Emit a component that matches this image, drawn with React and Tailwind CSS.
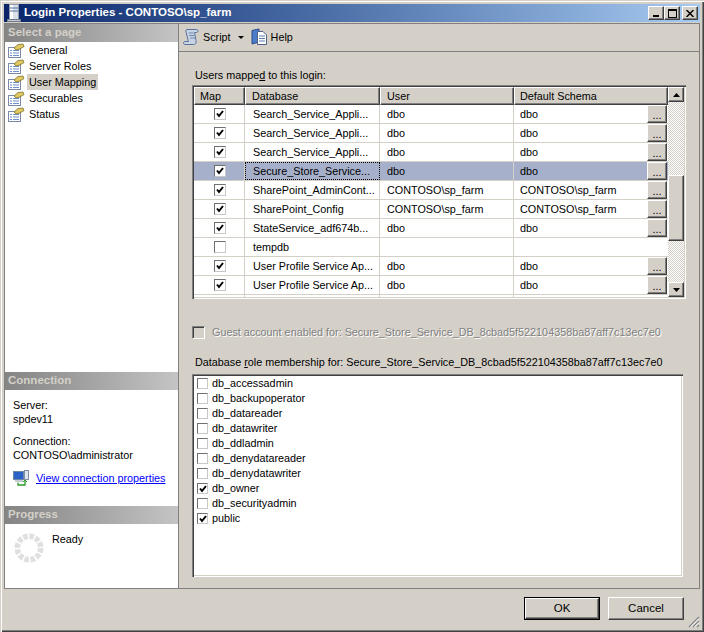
import React from 'react';

const FONT = "font-['Liberation_Sans',Arial,sans-serif]";
const BEVEL = 'border border-t-white border-l-white border-r-[#404040] border-b-[#404040] shadow-[inset_-1px_-1px_0_#808080] bg-[#d4d0c8]';
const SUNKEN = 'shadow-[inset_1px_1px_0_#808080,inset_2px_2px_0_#404040,inset_-1px_-1px_0_#fff,inset_-2px_-2px_0_#d4d0c8]';
const HEADER_BAR = 'flex items-center h-[18px] px-[3px] bg-linear-to-r from-[#858585] to-[#c4c4c4] text-[11.5px] font-bold text-[#d4d0c8]';

const PAGES = ['General', 'Server Roles', 'User Mapping', 'Securables', 'Status'];

const ROWS = [
  { db: 'Search_Service_Appli...', user: 'dbo', schema: 'dbo', on: true },
  { db: 'Search_Service_Appli...', user: 'dbo', schema: 'dbo', on: true },
  { db: 'Search_Service_Appli...', user: 'dbo', schema: 'dbo', on: true },
  { db: 'Secure_Store_Service...', user: 'dbo', schema: 'dbo', on: true, selected: true },
  { db: 'SharePoint_AdminCont...', user: 'CONTOSO\\sp_farm', schema: 'CONTOSO\\sp_farm', on: true },
  { db: 'SharePoint_Config', user: 'CONTOSO\\sp_farm', schema: 'CONTOSO\\sp_farm', on: true },
  { db: 'StateService_adf674b...', user: 'dbo', schema: 'dbo', on: true },
  { db: 'tempdb', user: '', schema: '', on: false },
  { db: 'User Profile Service Ap...', user: 'dbo', schema: 'dbo', on: true },
  { db: 'User Profile Service Ap...', user: 'dbo', schema: 'dbo', on: true },
  { db: '', user: '', schema: '', on: false, hidden: true },
];

const ROLES = [
  ['db_accessadmin', false],
  ['db_backupoperator', false],
  ['db_datareader', false],
  ['db_datawriter', false],
  ['db_ddladmin', false],
  ['db_denydatareader', false],
  ['db_denydatawriter', false],
  ['db_owner', true],
  ['db_securityadmin', false],
  ['public', true],
];

const Check = ({ checked, size = 'w-[12px] h-[12px]' }) => (
  <span className={`${size} shrink-0 bg-white border border-t-[#707070] border-l-[#707070] border-r-[#c8c8c8] border-b-[#c8c8c8] flex items-center justify-center`}>
    {checked && (
      <svg width="8" height="8" viewBox="0 0 8 8">
        <path d="M1 3.500 L3 6 L7 1" fill="none" stroke="#000" strokeWidth="2" />
      </svg>
    )}
  </span>
);

const PageIcon = () => (
  <svg width="17" height="15" viewBox="0 0 17 15" className="shrink-0">
    <rect x="0.500" y="4.500" width="12" height="10" fill="#fff" stroke="#7a8aa8" />
    <path d="M2 7.500h2M5 7.500h6M2 10h2M5 10h6M2 12.500h2M5 12.500h6" stroke="#6f8fc8" />
    <path d="M6 5 L10 1.500 L15 1 L16 3.500 L12 6 L8 7 Z" fill="#e0c860" stroke="#706020" strokeWidth="0.7" />
  </svg>
);

// rolled scroll, slanted like the toolbar glyph
const ScriptIcon = () => (
  <svg width="16" height="18" viewBox="0 0 16 18" className="shrink-0">
    <path d="M4 1.500 H13.500 C15.500 1.500 15.500 4.500 13.500 4.500 H11.500 L13 12.500 C13.500 15 12.500 16.500 10.500 16.500 H2 C0 16.500 0 13.500 2 13.500 H5.500 L3 4 C2.700 2.500 3 1.500 4 1.500 Z" fill="#c8d4e6" stroke="#5a7298" />
    <path d="M5.500 5h5M6.200 7.500h5M7 10h5" stroke="#6c86ac" />
  </svg>
);

const HelpIcon = () => (
  <svg width="17" height="18" viewBox="0 0 17 18" className="shrink-0">
    <path d="M1 2.500 L8 1 V14 L1 16 Z" fill="#4a7cc8" stroke="#2a4c88" />
    <path d="M6.500 3.500 H12 L15.500 7 V16.500 H6.500 Z" fill="#fff" stroke="#50608a" />
    <path d="M8 8h6M8 10.500h6M8 13h6" stroke="#5a7ab0" />
  </svg>
);

const ServerIcon = () => (
  <svg width="14" height="18" viewBox="0 0 14 18" className="shrink-0">
    <rect x="2.500" y="0.500" width="9" height="15" fill="#d8dfe8" stroke="#9098a8" />
    <rect x="3" y="1" width="3" height="14" fill="#ffffff" />
    <path d="M3 4h8M3 7h8" stroke="#5070a0" />
    <rect x="0.500" y="15.500" width="13" height="2" fill="#c0c8d8" stroke="#707888" />
  </svg>
);

const ConnectionIcon = () => (
  <svg width="17" height="16" viewBox="0 0 17 16" className="shrink-0">
    <rect x="0.500" y="1.500" width="10" height="8" fill="#2a62c8" stroke="#7088a8" />
    <rect x="2" y="10" width="8" height="2" fill="#c8ccd4" />
    <rect x="11.500" y="0.500" width="4" height="9" fill="#e0e4ec" stroke="#8090a8" />
    <path d="M5 12.500 V15 H12 V11" fill="none" stroke="#2c9a2c" strokeWidth="1.300" />
    <path d="M10 12 L12 10 L14 12" fill="none" stroke="#2c9a2c" />
  </svg>
);

const TitleButton = ({ children }) => (
  <span className={`${BEVEL} w-[16px] h-[14px] flex items-center justify-center`}>{children}</span>
);

const ScrollButton = ({ up }) => (
  <div className={`${BEVEL} h-[15px] flex items-center justify-center`}>
    <svg width="7" height="4" viewBox="0 0 7 4">
      <path d={up ? 'M0 4 L3.500 0 L7 4 Z' : 'M0 0 L3.500 4 L7 0 Z'} fill="#000" />
    </svg>
  </div>
);

const EllipsisButton = () => (
  <span className={`${BEVEL} absolute right-[1px] top-0 w-[20px] h-[18px] flex items-end justify-center pb-[2px] text-[11px] leading-[10px]`}>...</span>
);

const GridRow = ({ row }) => {
  const bg = row.selected ? 'bg-[#a6b0ca]' : 'bg-white';
  return (
    <div className={`flex h-[19px] leading-[18px] border-b border-[#d4d0c8] ${bg}`}>
      <div className="w-[51px] shrink-0 border-r border-[#d4d0c8] flex items-center justify-center pl-[1px]">
        {!row.hidden && <Check checked={row.on} />}
      </div>
      <div className={`w-[135px] shrink-0 border-r pl-[8px] whitespace-nowrap overflow-hidden ${row.selected ? 'border-r-transparent outline-1 outline-dotted -outline-offset-1 outline-black' : 'border-[#d4d0c8]'}`}>
        {row.db}
      </div>
      <div className="w-[134px] shrink-0 border-r border-[#d4d0c8] pl-[7px] whitespace-nowrap">{row.user}</div>
      <div className="relative flex-1 pl-[6px] whitespace-nowrap">
        {row.schema}
        {row.schema && <EllipsisButton />}
      </div>
    </div>
  );
};

const HeaderCell = ({ className, children }) => (
  <div className={`${BEVEL} ${className} h-[18px] leading-[16px] shrink-0 whitespace-nowrap`}>{children}</div>
);

export default function App() {
  return (
    <div className={`${FONT} w-[704px] h-[632px] flex flex-col pt-[4px] pl-[4px] pr-[4px] pb-[4px] bg-[#d4d0c8] text-[10.8px] text-black overflow-hidden shadow-[inset_1px_1px_0_#d4d0c8,inset_2px_2px_0_#fff,inset_-1px_-1px_0_#404040,inset_-2px_-2px_0_#808080]`}>
      {/* title bar */}
      <div className="h-[18px] shrink-0 flex items-center pl-[3px] pr-[2px] bg-linear-to-r from-[#0a246a] to-[#a6caf0]">
        <ServerIcon />
        <span className="ml-[3px] text-white font-bold text-[11.500px]">Login Properties - CONTOSO\sp_farm</span>
        <div className="ml-auto flex">
          <TitleButton>
            <span className="w-[6px] h-[2px] bg-black mt-[6px]" />
          </TitleButton>
          <TitleButton>
            <span className="w-[9px] h-[9px] border border-black border-t-2" />
          </TitleButton>
          <span className="ml-[2px]">
            <TitleButton>
              <svg width="8" height="7" viewBox="0 0 8 7">
                <path d="M0.500 0 L7.500 7 M7.500 0 L0.500 7" stroke="#000" strokeWidth="1.500" />
              </svg>
            </TitleButton>
          </span>
        </div>
      </div>

      {/* body */}
      <div className="mt-[1px] h-[566px] shrink-0 flex border-t border-b border-r border-[#808080]">
        {/* left panel */}
        <div className="w-[175px] shrink-0 bg-white flex flex-col border-l border-r border-[#808080]">
          <div className={HEADER_BAR}>Select a page</div>
          <div className="flex flex-col pl-[3px]">
            {PAGES.map((page) => (
              <div key={page} className="flex items-center h-[16px]">
                <PageIcon />
                <span className={`ml-[2px] h-[16px] leading-[16px] px-[2px] ${page === 'User Mapping' ? 'bg-[#d4d0c8]' : ''}`}>{page}</span>
              </div>
            ))}
          </div>
          <div className="flex-1" />
          <div className={HEADER_BAR}>Connection</div>
          <div className="h-[116px] pl-[8px] pt-[8px] leading-[14px]">
            <div>Server:</div>
            <div>spdev11</div>
            <div className="mt-[8px]">Connection:</div>
            <div>CONTOSO\administrator</div>
            <div className="mt-[8px] flex items-center">
              <ConnectionIcon />
              <span className="ml-[6px] text-[#0000ff] underline whitespace-nowrap">View connection properties</span>
            </div>
          </div>
          <div className={HEADER_BAR}>Progress</div>
          <div className="h-[64px] flex pl-[9px] pt-[9px]">
            <svg width="30" height="30" viewBox="0 0 32 32" className="shrink-0">
              <circle cx="16" cy="16" r="12.500" fill="none" stroke="#e0e0e0" strokeWidth="6" strokeDasharray="4.800 1.745" />
            </svg>
            <span className="ml-[8px] leading-[14px] -mt-[1px]">Ready</span>
          </div>
        </div>

        {/* right panel */}
        <div className="flex-1 min-w-0 flex flex-col">
          <div className="h-[28px] shrink-0 flex items-center pl-[4px] pb-[1px] border-b border-[#808080]">
            <ScriptIcon />
            <span className="ml-[4px]">Script</span>
            <svg width="6" height="3" viewBox="0 0 6 3" className="ml-[7px]">
              <path d="M0 0 L3 3 L6 0 Z" fill="#000" />
            </svg>
            <span className="ml-[7px]"><HelpIcon /></span>
            <span className="ml-[3px]">Help</span>
          </div>

          <div className="flex-1 flex flex-col pl-[13px] pr-[13px]">
            <div className="mt-[16px] h-[14px] leading-[14px] pl-[3px]">
              Users mappe<span className="underline">d</span> to this login:
            </div>

            {/* users grid */}
            <div className={`${SUNKEN} mt-[3px] w-[494px] h-[214px] shrink-0 p-[2px] bg-white overflow-hidden flex`}>
              <div className="flex-1 min-w-0 overflow-hidden">
                <div className="flex">
                  <HeaderCell className="w-[51px] pl-[5px]">Map</HeaderCell>
                  <HeaderCell className="w-[135px] pl-[6px]">Database</HeaderCell>
                  <HeaderCell className="w-[134px] pl-[6px]">User</HeaderCell>
                  <HeaderCell className="flex-1 !shrink pl-[5px]">Default Schema</HeaderCell>
                </div>
                {ROWS.map((row, i) => (
                  <GridRow key={i} row={row} />
                ))}
              </div>
              <div className="w-[16px] shrink-0 flex flex-col bg-[repeating-conic-gradient(#d4d0c8_0_25%,#ffffff_0_50%)] bg-[length:2px_2px]">
                <ScrollButton up />
                <div className="flex-1 pt-[73px]">
                  <div className={`${BEVEL} h-[66px]`} />
                </div>
                <ScrollButton />
              </div>
            </div>

            {/* guest checkbox */}
            <div className="mt-[26px] h-[14px] flex items-center">
              <span className="w-[13px] h-[13px] shrink-0 border border-[#808080] border-r-white border-b-white shadow-[inset_1px_1px_0_#404040]" />
              <span className="ml-[7px] whitespace-nowrap text-[#808080] [text-shadow:1px_1px_0_#fff]">
                Guest account enabled for: Secure_Store_Service_DB_8cbad5f522104358ba87aff7c13ec7e0
              </span>
            </div>

            <div className="mt-[16px] h-[14px] leading-[14px] pl-[3px] whitespace-nowrap">
              Database <span className="underline">r</span>ole membership for: Secure_Store_Service_DB_8cbad5f522104358ba87aff7c13ec7e0
            </div>

            {/* role list */}
            <div className={`${SUNKEN} mt-[5px] w-[491px] h-[203px] shrink-0 bg-white pt-[2px] pl-[5px] flex flex-col`}>
              {ROLES.map(([name, checked]) => (
                <div key={name} className="flex items-center h-[15px]">
                  <Check checked={checked} size="w-[11px] h-[11px]" />
                  <span className="ml-[4px]">{name}</span>
                </div>
              ))}
            </div>
          </div>
        </div>
      </div>

      {/* footer */}
      <div className="flex-1 relative flex items-start justify-end pr-[16px] pt-[8px] gap-[8px]">
        <button className={`${BEVEL} w-[74px] h-[21px] mt-[1px] mr-[1px] outline outline-1 outline-black text-[11.500px]`}>OK</button>
        <button className={`${BEVEL} w-[76px] h-[23px] text-[11.500px]`}>Cancel</button>
        <svg width="13" height="13" viewBox="0 0 13 13" className="absolute right-[0px] bottom-[0px]">
          <path d="M12 2 L2 12 M12 6 L6 12 M12 10 L10 12" stroke="#808080" strokeWidth="1.200" />
          <path d="M12 3.500 L3.500 12 M12 7.500 L7.500 12" stroke="#fff" />
        </svg>
      </div>
    </div>
  );
}
